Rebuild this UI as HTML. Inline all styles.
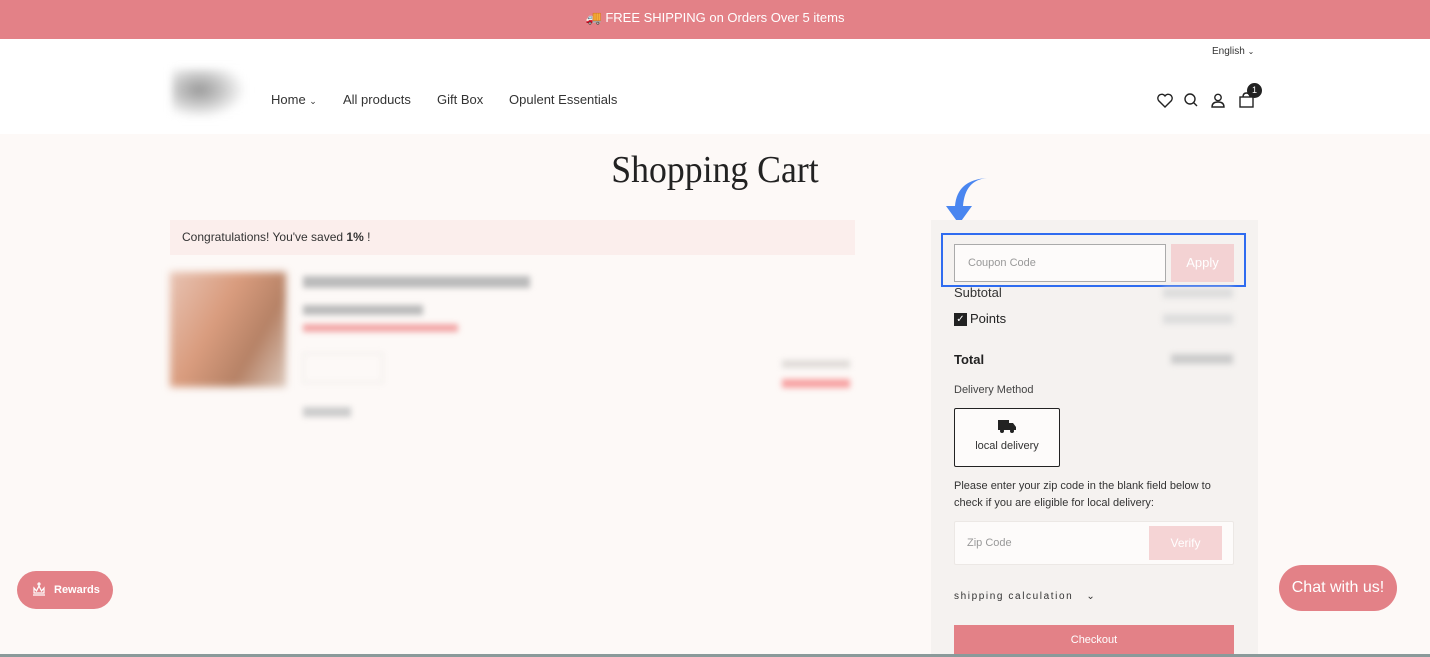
<!DOCTYPE html>
<html><head><meta charset="utf-8">
<style>
*{box-sizing:border-box;margin:0;padding:0}
body{width:1430px;height:657px;overflow:hidden;background:#fdf9f7;font-family:"Liberation Sans",sans-serif;color:#222;position:relative}
.banner{position:absolute;left:0;top:0;width:1430px;height:39px;background:#e38187;color:#fff;font-size:13px;text-align:center;line-height:35px}
.header{position:absolute;left:0;top:39px;width:1430px;height:95px;background:#fff}
.abs{position:absolute}
.nav{font-size:13px;color:#333;top:92px}
.blur{filter:blur(3px)}
.panel{position:absolute;left:931px;top:220px;width:327px;height:437px;background:#f5f2f0}
</style></head><body>
<div class="banner">🚚 FREE SHIPPING on Orders Over 5 items</div>
<div class="header">
  <div class="abs" style="left:1212px;top:7px;font-size:10px;color:#333">English <span style="font-size:8px">&#8964;</span></div>
  <div class="abs" style="left:172px;top:30px;width:78px;height:52px;background:radial-gradient(ellipse at 35% 40%,#999 0,#c4c4c4 30%,#fff 65%);filter:blur(4px)"></div>
  <svg class="abs" style="left:1156px;top:52px" width="100" height="20" viewBox="0 0 100 20" fill="none" stroke="#222" stroke-width="1.4">
    <path d="M9 16 L2.5 9.5 A3.6 3.6 0 0 1 9 5 A3.6 3.6 0 0 1 15.5 9.5 Z"/>
    <circle cx="34" cy="8" r="5"/><path d="M37.5 11.5 L41 15"/>
    <circle cx="62" cy="6.5" r="3.2"/><path d="M56 16 Q56 11 62 11 Q68 11 68 16 Z"/>
    <rect x="84" y="6" width="13" height="10"/><path d="M87 6 Q87 2 90.5 2 Q94 2 94 6"/>
  </svg>
  <div class="abs" style="left:1247px;top:44px;width:15px;height:15px;border-radius:50%;background:#222;color:#fff;font-size:9px;text-align:center;line-height:15px">1</div>
</div>
<div class="abs nav" style="left:271px">Home <span style="font-size:9px">&#8964;</span></div>
<div class="abs nav" style="left:343px">All products</div>
<div class="abs nav" style="left:437px">Gift Box</div>
<div class="abs nav" style="left:509px">Opulent Essentials</div>

<div class="abs" style="left:0;top:148px;width:1430px;text-align:center;font-family:'Liberation Serif',serif;font-size:38px;color:#222;transform:scaleX(0.94)">Shopping Cart</div>

<div class="abs" style="left:170px;top:220px;width:685px;height:35px;background:#fbeeec;font-size:12px;line-height:35px;padding-left:12px;color:#333">Congratulations! You've saved <b>1%</b> !</div>

<div class="abs" style="left:170px;top:272px;width:116px;height:115px;background:linear-gradient(120deg,#e8c3b3,#d99c7e 40%,#b68266 70%,#dcc8bb);filter:blur(4px)"></div>
<div class="abs blur" style="left:303px;top:276px;width:227px;height:12px;background:#bbb"></div>
<div class="abs blur" style="left:303px;top:305px;width:120px;height:10px;background:#bbb"></div>
<div class="abs blur" style="left:303px;top:324px;width:155px;height:8px;background:#f2a6a6"></div>
<div class="abs blur" style="left:303px;top:353px;width:80px;height:30px;border:1px solid #e6e2df"></div>
<div class="abs blur" style="left:303px;top:407px;width:48px;height:10px;background:#ccc"></div>
<div class="abs blur" style="left:782px;top:360px;width:68px;height:8px;background:#e0dcd9"></div>
<div class="abs blur" style="left:782px;top:379px;width:68px;height:9px;background:#f7a3a3"></div>

<svg class="abs" style="left:945px;top:176px" width="45" height="50" viewBox="0 0 45 50"><path d="M42 2 Q20 4 18 30 L27 30 L14 48 L1 30 L10 30 Q12 4 42 2 Z" fill="#4a86f0"/></svg>

<div class="panel">
  <div class="abs" style="left:10px;top:13px;width:305px;height:54px;border:2px solid #2f6cf0"></div>
  <div class="abs" style="left:23px;top:24px;width:212px;height:38px;border:1px solid #aaa;background:#fdfbfa;font-size:11px;color:#999;line-height:36px;padding-left:13px">Coupon Code</div>
  <div class="abs" style="left:240px;top:24px;width:63px;height:38px;background:#f3d2d3;color:#fff;font-size:13px;text-align:center;line-height:38px">Apply</div>
  <div class="abs" style="left:23px;top:65px;font-size:13px;color:#333">Subtotal</div>
  <div class="abs blur" style="left:232px;top:68px;width:70px;height:10px;background:#ddd"></div>
  <div class="abs" style="left:23px;top:93px;width:13px;height:13px;background:#222;color:#fff;font-size:10px;text-align:center;line-height:13px">✓</div>
  <div class="abs" style="left:39px;top:91px;font-size:13px;color:#222">Points</div>
  <div class="abs blur" style="left:232px;top:94px;width:70px;height:10px;background:#ddd"></div>
  <div class="abs" style="left:23px;top:132px;font-size:13px;font-weight:bold;color:#222">Total</div>
  <div class="abs blur" style="left:240px;top:134px;width:62px;height:10px;background:#ccc"></div>
  <div class="abs" style="left:23px;top:164px;font-size:11px;color:#444">Delivery Method</div>
  <div class="abs" style="left:23px;top:188px;width:106px;height:59px;border:1.5px solid #222;border-radius:2px;background:#fdfbfa;text-align:center;font-size:11px;color:#333">
    <svg style="margin-top:10px" width="20" height="15" viewBox="0 0 20 15"><path d="M1 1h11v10H1z M12 4h4l3 4v3h-7z" fill="#222"/><circle cx="5" cy="12" r="2" fill="#222"/><circle cx="15" cy="12" r="2" fill="#222"/></svg>
    <div style="margin-top:3px">local delivery</div>
  </div>
  <div class="abs" style="left:23px;top:258px;width:284px;font-size:11px;line-height:17px;color:#333">Please enter your zip code in the blank field below to check if you are eligible for local delivery:</div>
  <div class="abs" style="left:23px;top:301px;width:280px;height:44px;border:1px solid #ece8e5;background:#fdfbfa;border-radius:2px;font-size:11px;color:#999;line-height:42px;padding-left:12px">Zip Code</div>
  <div class="abs" style="left:218px;top:306px;width:73px;height:34px;background:#f5d4d5;color:#fff;font-size:12px;text-align:center;line-height:34px">Verify</div>
  <div class="abs" style="left:23px;top:371px;font-size:10px;letter-spacing:1.6px;color:#333">shipping calculation &nbsp; <span style="font-size:10px">&#8964;</span></div>
  <div class="abs" style="left:23px;top:405px;width:280px;height:32px;background:#e38187;color:#fff;font-size:11px;text-align:center;line-height:30px">Checkout</div>
</div>

<div class="abs" style="left:17px;top:571px;width:96px;height:38px;border-radius:19px;background:#e38187;color:#fff;font-size:11px;font-weight:bold;line-height:38px;padding-left:37px">Rewards</div>
<svg class="abs" style="left:32px;top:582px" width="14" height="14" viewBox="0 0 14 14" fill="none" stroke="#fff" stroke-width="1.2"><circle cx="7" cy="2" r="1"/><path d="M2 6 L4.5 9 L7 4 L9.5 9 L12 6 L12 11 L2 11 Z M1 13 H13"/></svg>
<div class="abs" style="left:1279px;top:565px;width:118px;height:46px;border-radius:23px;background:#e38187;color:#fff;font-size:16px;text-align:center;line-height:46px">Chat with us!</div>
<div class="abs" style="left:0;top:654px;width:1430px;height:3px;background:#8a9a9a"></div>
</body></html>
